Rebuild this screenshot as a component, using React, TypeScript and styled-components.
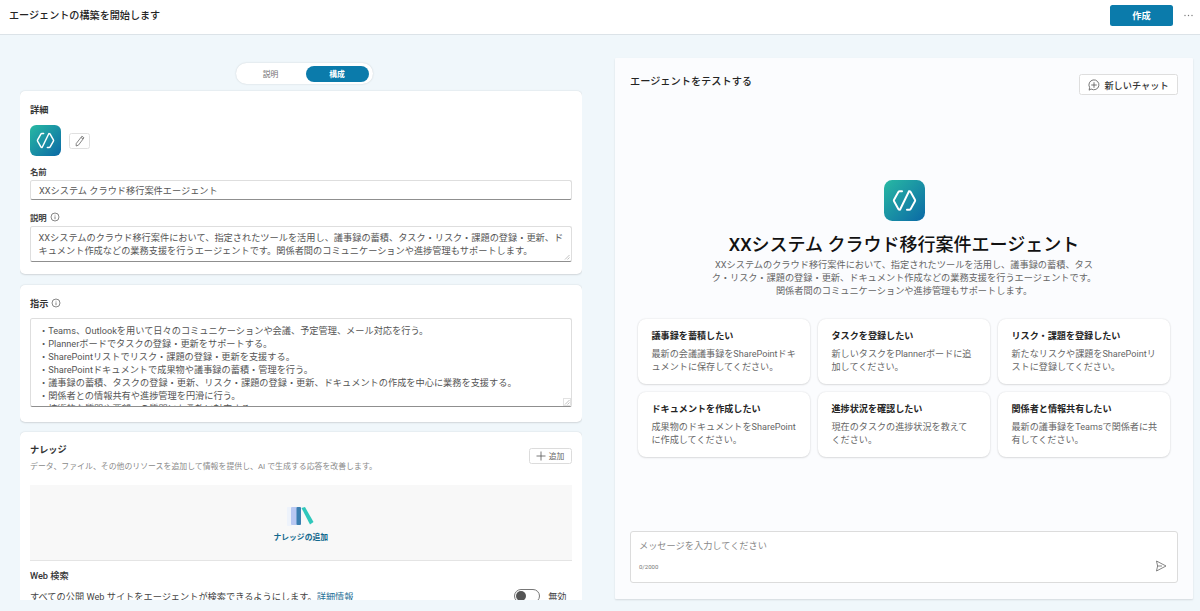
import React from "react";
import styled, { createGlobalStyle } from "styled-components";

const FONT = `Roboto, "Noto Sans CJK JP", sans-serif`;

const Global = createGlobalStyle`
  html, body { margin: 0; padding: 0; height: 100%; }
  body {
    background: #f0f7fb;
    font-family: ${FONT};
    color: #242424;
    overflow: hidden;
  }
  * { box-sizing: border-box; }
`;

const Page = styled.div`
  width: 1200px;
  height: 611px;
  overflow: hidden;
  display: flex;
  flex-direction: column;
`;

const Header = styled.header`
  height: 35px;
  flex: none;
  background: #fff;
  border-bottom: 1px solid #dce3e8;
  display: flex;
  align-items: center;
  padding: 0 7px 4px 9px;
`;

const PageTitle = styled.h1`
  margin: 1.5px 0 0;
  flex: 1;
  font-size: 10.1px;
  font-weight: 500;
  color: #242424;
  line-height: 14px;
`;

const CreateButton = styled.button`
  width: 63px;
  height: 21px;
  margin-right: 10px;
  border: none;
  border-radius: 2.5px;
  background: #0b7bab;
  color: #fff;
  font: 700 9.2px ${FONT};
`;

const More = styled.span`
  width: 10px;
  height: 21px;
  display: flex;
  align-items: center;
  justify-content: center;
`;

const Main = styled.main`
  flex: 1;
  min-height: 0;
  display: flex;
  align-items: flex-start;
  padding-left: 20px;
`;

const LeftColumn = styled.section`
  width: 562px;
  height: 565px;
  overflow: hidden;
  display: flex;
  flex-direction: column;
  align-items: center;
  padding-top: 28px;
  gap: 7px;
`;

const Toggle = styled.div`
  flex: none;
  width: 137px;
  height: 21px;
  margin-left: 6px;
  border-radius: 11px;
  background: #fff;
  box-shadow: 0 0 2px rgba(0, 0, 0, 0.16);
  display: flex;
  align-items: center;
`;

const ToggleItem = styled.span<{ $active?: boolean }>`
  flex: none;
  height: 16px;
  width: ${(p) => (p.$active ? "63px" : "70px")};
  border-radius: 8px;
  display: flex;
  align-items: center;
  justify-content: center;
  font-size: 7.8px;
  font-weight: ${(p) => (p.$active ? 700 : 400)};
  color: ${(p) => (p.$active ? "#fff" : "#707070")};
  background: ${(p) => (p.$active ? "#0b7bab" : "transparent")};
`;

const Card = styled.div<{ $height: number; $gap?: number }>`
  flex: none;
  width: 562px;
  height: ${(p) => p.$height}px;
  margin-bottom: ${(p) => p.$gap ?? 0}px;
  background: #fff;
  border-radius: 5px;
  box-shadow: 0 0 2px rgba(0, 0, 0, 0.12), 0 1px 2px rgba(0, 0, 0, 0.1);
  padding: 11px 10.5px 0 10px;
  display: flex;
  flex-direction: column;
`;

const SectionLabel = styled.div`
  display: flex;
  align-items: center;
  gap: 3px;
  height: 14px;
  font-size: 9.2px;
  font-weight: 700;
  color: #333;
`;

const AvatarRow = styled.div`
  display: flex;
  align-items: center;
  gap: 8px;
  margin: 9px 0 8px;
`;

const EditButton = styled.button`
  width: 21px;
  height: 16px;
  padding: 0;
  background: #fff;
  border: 1px solid #e0e0e0;
  border-radius: 2.5px;
  display: flex;
  align-items: center;
  justify-content: center;
`;

const FieldLabel = styled(SectionLabel)<{ $top?: number }>`
  height: 13px;
  margin-top: ${(p) => p.$top ?? 0}px;
  font-size: 8.4px;
  color: #444;
`;

const InputBox = styled.div<{ $height: number; $pad: string; $top?: number }>`
  height: ${(p) => p.$height}px;
  margin-top: ${(p) => p.$top ?? 3}px;
  border: 1px solid #dedede;
  border-bottom: 1px solid #8f8f8f;
  border-radius: 2.5px;
  padding: ${(p) => p.$pad};
  font-size: 9.2px;
  line-height: 13px;
  color: #555;
  background: #fff;
  position: relative;
  overflow: hidden;
`;

const Grip = styled.svg`
  position: absolute;
  right: 1px;
  bottom: 1px;
`;

const GripBox = styled.span`
  position: absolute;
  right: 0;
  bottom: 0;
  width: 8px;
  height: 8px;
  background: #fff;
  border: 1px solid #e2e2e2;
  display: flex;
`;

const BulletLine = styled.div`
  white-space: nowrap;
`;

const KnowledgeHead = styled.div`
  display: flex;
  justify-content: space-between;
  align-items: flex-start;
  height: 42px;
`;

const KnowledgeTitle = styled.div`
  margin-top: 1px;
  font-size: 9.2px;
  font-weight: 700;
  line-height: 12px;
  color: #333;
`;

const KnowledgeSub = styled.div`
  margin-top: 5px;
  font-size: 7.9px;
  line-height: 12px;
  color: #8a8a8a;
`;

const AddButton = styled.button`
  width: 43px;
  height: 15.5px;
  margin-top: 5px;
  background: #fff;
  border: 1px solid #dcdcdc;
  border-radius: 2.5px;
  padding: 0;
  display: flex;
  align-items: center;
  justify-content: center;
  gap: 3px;
  color: #666;
  font: 400 7.8px ${FONT};
`;

const Dropzone = styled.div`
  flex: none;
  height: 76px;
  background: #f8f8f8;
  border-bottom: 1px solid #e4e4e4;
  display: flex;
  flex-direction: column;
  align-items: center;
  padding-top: 22px;
`;

const DropLabel = styled.div`
  margin-top: 6px;
  font-size: 7.8px;
  line-height: 12px;
  font-weight: 700;
  color: #11688d;
`;

const WebTitle = styled.div`
  margin-top: 8px;
  height: 14px;
  font-size: 9.2px;
  line-height: 14px;
  font-weight: 500;
  color: #333;
`;

const WebRow = styled.div`
  margin-top: 5px;
  height: 16px;
  display: flex;
  align-items: center;
  font-size: 9.2px;
  color: #444;
`;

const WebText = styled.span`
  flex: 1;
`;

const DocLink = styled.a`
  color: #1f6f96;
  text-decoration: underline;
`;

const Switch = styled.span`
  width: 26px;
  height: 14px;
  border: 1px solid #777;
  border-radius: 7px;
  margin-right: 8px;
  display: flex;
  align-items: center;
  padding-left: 1px;
`;

const Knob = styled.span`
  width: 10px;
  height: 10px;
  border-radius: 50%;
  background: #555;
`;

const SwitchLabel = styled.span`
  margin-right: 5px;
`;

const RightPanel = styled.section`
  width: 578px;
  height: 541px;
  margin-left: 33px;
  margin-top: 23px;
  background: #fbfcfe;
  box-shadow: 0 1px 2px rgba(0, 0, 0, 0.12);
  border-radius: 1px;
  padding: 16px 15px 16px 15px;
  display: flex;
  flex-direction: column;
`;

const PanelHead = styled.div`
  display: flex;
  justify-content: space-between;
  align-items: flex-start;
  height: 106px;
`;

const PanelTitle = styled.div`
  margin-top: 1px;
  font-size: 10.2px;
  line-height: 14px;
  font-weight: 500;
  color: #242424;
`;

const NewChat = styled.button`
  width: 99px;
  height: 21px;
  background: #fff;
  border: 1px solid #dedede;
  border-radius: 2.5px;
  display: flex;
  align-items: center;
  justify-content: center;
  gap: 4px;
  padding: 0;
  color: #333;
  font: 500 9.2px ${FONT};
`;

const Hero = styled.div`
  display: flex;
  flex-direction: column;
  align-items: center;
`;

const HeroTitle = styled.h2`
  margin: 12px 0 0;
  font-size: 18px;
  line-height: 24px;
  font-weight: 500;
  color: #111;
`;

const HeroDesc = styled.p`
  margin: 1px 0 0;
  width: 393px;
  text-align: center;
  font-size: 9.2px;
  line-height: 13px;
  color: #666;
`;

const PromptGrid = styled.div`
  margin: 22px 8px 0;
  display: grid;
  grid-template-columns: repeat(3, 172px);
  grid-auto-rows: 65px;
  gap: 8px;
`;

const Prompt = styled.div`
  background: #fff;
  border-radius: 8px;
  box-shadow: 0 0 2px rgba(0, 0, 0, 0.12), 0 1px 2px rgba(0, 0, 0, 0.1);
  padding: 11px 8px 0 13.5px;
`;

const PromptTitle = styled.div`
  font-size: 9.1px;
  line-height: 13px;
  font-weight: 700;
  color: #242424;
`;

const PromptText = styled.div`
  margin-top: 5px;
  font-size: 9.1px;
  line-height: 13px;
  color: #666;
  white-space: pre-line;
`;

const Spacer = styled.div`
  flex: 1;
`;

const Composer = styled.div`
  flex: none;
  height: 52px;
  background: #fff;
  border: 1px solid #dcdcdc;
  border-radius: 3px;
  padding: 7px 10px 0 8px;
  display: flex;
  flex-direction: column;
`;

const Placeholder = styled.div`
  font-size: 9.2px;
  line-height: 13px;
  color: #8a8a8a;
`;

const ComposerFoot = styled.div`
  margin-top: 7px;
  display: flex;
  align-items: center;
  justify-content: space-between;
  height: 14px;
`;

const Counter = styled.span`
  font-size: 6px;
  color: #777;
`;

const Info = () => (
  <svg width="10" height="10" viewBox="0 0 10 10" fill="none" stroke="#555" strokeWidth="0.7">
    <circle cx="5" cy="5" r="4" />
    <path d="M5 4.4V7.2M5 2.8V3.5" />
  </svg>
);

const AgentIcon = ({ size }: { size: number }) => {
  const id = `g${size}`;
  return (
    <svg width={size} height={size} viewBox="0 0 40 40">
      <defs>
        <linearGradient id={id} x1="0" y1="0" x2="1" y2="1">
          <stop offset="0" stopColor="#28b9a3" />
          <stop offset="1" stopColor="#0b69a6" />
        </linearGradient>
      </defs>
      <rect width="40" height="40" rx="8" fill={`url(#${id})`} />
      <path
        d="M17.6 11H15.4a1.6 1.6 0 0 0-1.4.8L9.8 19.2a1.6 1.6 0 0 0 0 1.6l4.2 7.4a1.6 1.6 0 0 0 1.4.8H15.6M24.4 11h.2a1.6 1.6 0 0 1 1.4.8l4.2 7.4a1.6 1.6 0 0 1 0 1.6l-4.2 7.4a1.6 1.6 0 0 1-1.4.8H22.4M24.4 11 15.6 29"
        fill="none"
        stroke="#fff"
        strokeWidth="1.9"
        strokeLinecap="round"
        strokeLinejoin="round"
      />
    </svg>
  );
};

const instructions = [
  "・Teams、Outlookを用いて日々のコミュニケーションや会議、予定管理、メール対応を行う。",
  "・Plannerボードでタスクの登録・更新をサポートする。",
  "・SharePointリストでリスク・課題の登録・更新を支援する。",
  "・SharePointドキュメントで成果物や議事録の蓄積・管理を行う。",
  "・議事録の蓄積、タスクの登録・更新、リスク・課題の登録・更新、ドキュメントの作成を中心に業務を支援する。",
  "・関係者との情報共有や進捗管理を円滑に行う。",
  "・技術的な質問や要望への質問にも柔軟に対応する。",
];

const prompts = [
  ["議事録を蓄積したい", "最新の会議議事録をSharePointドキ\nュメントに保存してください。"],
  ["タスクを登録したい", "新しいタスクをPlannerボードに追\n加してください。"],
  ["リスク・課題を登録したい", "新たなリスクや課題をSharePointリ\nストに登録してください。"],
  ["ドキュメントを作成したい", "成果物のドキュメントをSharePoint\nに作成してください。"],
  ["進捗状況を確認したい", "現在のタスクの進捗状況を教えて\nください。"],
  ["関係者と情報共有したい", "最新の議事録をTeamsで関係者に共\n有してください。"],
];

const DESC =
  "XXシステムのクラウド移行案件において、指定されたツールを活用し、議事録の蓄積、タスク・リスク・課題の登録・更新、ドキュメント作成などの業務支援を行うエージェントです。関係者間のコミュニケーションや進捗管理もサポートします。";

export default function App() {
  return (
    <Page>
      <Global />
      <Header>
        <PageTitle>エージェントの構築を開始します</PageTitle>
        <CreateButton>作成</CreateButton>
        <More>
          <svg width="9" height="3" viewBox="0 0 9 3" fill="#777">
            <circle cx="1" cy="1.5" r="0.7" />
            <circle cx="4.5" cy="1.5" r="0.7" />
            <circle cx="8" cy="1.5" r="0.7" />
          </svg>
        </More>
      </Header>
      <Main>
        <LeftColumn>
          <Toggle>
            <ToggleItem>説明</ToggleItem>
            <ToggleItem $active>構成</ToggleItem>
          </Toggle>
          <Card $height={183} $gap={4}>
            <SectionLabel>詳細</SectionLabel>
            <AvatarRow>
              <AgentIcon size={31} />
              <EditButton>
                <svg width="12" height="12" viewBox="0 0 12 12" fill="none" stroke="#666" strokeWidth="0.8" strokeLinejoin="round">
                  <path d="M7.9 1.2 10 2.8 4.4 10.2 2.2 11 2.2 8.6ZM7 2.4 9 4" />
                </svg>
              </EditButton>
            </AvatarRow>
            <FieldLabel>名前</FieldLabel>
            <InputBox $height={20} $pad="3px 8px 0">XXシステム クラウド移行案件エージェント</InputBox>
            <FieldLabel $top={10}>
              説明 <Info />
            </FieldLabel>
            <InputBox $height={36} $pad="4px 6px 0 7.5px">
              {DESC}
              <Grip width="6" height="6" viewBox="0 0 6 6" stroke="#999" strokeWidth="0.6">
                <path d="M1 5.5 5.5 1M3.5 5.5 5.5 3.5" />
              </Grip>
            </InputBox>
          </Card>
          <Card $height={137} $gap={3}>
            <SectionLabel>
              指示 <Info />
            </SectionLabel>
            <InputBox $height={89} $pad="5px 8px 0" $top={8}>
              {instructions.map((t) => (
                <BulletLine key={t}>{t}</BulletLine>
              ))}
              <GripBox>
                <svg width="6" height="6" viewBox="0 0 6 6" stroke="#999" strokeWidth="0.6">
                  <path d="M1 5.5 5.5 1M3.5 5.5 5.5 3.5" />
                </svg>
              </GripBox>
            </InputBox>
          </Card>
          <Card $height={180}>
            <KnowledgeHead>
              <div>
                <KnowledgeTitle>ナレッジ</KnowledgeTitle>
                <KnowledgeSub>データ、ファイル、その他のリソースを追加して情報を提供し、AI で生成する応答を改善します。</KnowledgeSub>
              </div>
              <AddButton>
                <svg width="10" height="10" viewBox="0 0 10 10" stroke="#555" strokeWidth="0.8">
                  <path d="M5 .5V9.5M.5 5H9.5" />
                </svg>
                追加
              </AddButton>
            </KnowledgeHead>
            <Dropzone>
              <svg width="27" height="19" viewBox="0 0 27 19">
                <rect x="0" y="0" width="5" height="19" rx="1" fill="#eef3fb" />
                <rect x="4" y="0" width="6.5" height="18" rx="1" fill="#b8c8f2" />
                <rect x="9.5" y="0" width="4.5" height="18" rx="1" fill="#3b7fb0" />
                <path d="M14.5 1 18 0 26.5 15 23 17.5 Z" fill="#2fc7bb" />
              </svg>
              <DropLabel>ナレッジの追加</DropLabel>
            </Dropzone>
            <WebTitle>Web 検索</WebTitle>
            <WebRow>
              <WebText>
                すべての公開 Web サイトをエージェントが検索できるようにします。<DocLink>詳細情報</DocLink>
              </WebText>
              <Switch>
                <Knob />
              </Switch>
              <SwitchLabel>無効</SwitchLabel>
            </WebRow>
          </Card>
        </LeftColumn>
        <RightPanel>
          <PanelHead>
            <PanelTitle>エージェントをテストする</PanelTitle>
            <NewChat>
              <svg width="12" height="12" viewBox="0 0 12 12" fill="none" stroke="#555" strokeWidth="0.8" strokeLinecap="round">
                <path d="M3.4 10.2A5 5 0 1 0 1.6 8.4L1.2 10.8Z" strokeLinejoin="round" />
                <path d="M6 3.6V8.4M3.6 6H8.4" />
              </svg>
              新しいチャット
            </NewChat>
          </PanelHead>
          <Hero>
            <AgentIcon size={41} />
            <HeroTitle>XXシステム クラウド移行案件エージェント</HeroTitle>
            <HeroDesc>{DESC}</HeroDesc>
          </Hero>
          <PromptGrid>
            {prompts.map(([title, text]) => (
              <Prompt key={title}>
                <PromptTitle>{title}</PromptTitle>
                <PromptText>{text}</PromptText>
              </Prompt>
            ))}
          </PromptGrid>
          <Spacer />
          <Composer>
            <Placeholder>メッセージを入力してください</Placeholder>
            <ComposerFoot>
              <Counter>0/2000</Counter>
              <svg width="12" height="12" viewBox="0 0 12 12" fill="none" stroke="#666" strokeWidth="0.8" strokeLinejoin="round">
                <path d="M1.5 1 11 6 1.5 11 2.6 6ZM2.6 6H7" />
              </svg>
            </ComposerFoot>
          </Composer>
        </RightPanel>
      </Main>
    </Page>
  );
}
